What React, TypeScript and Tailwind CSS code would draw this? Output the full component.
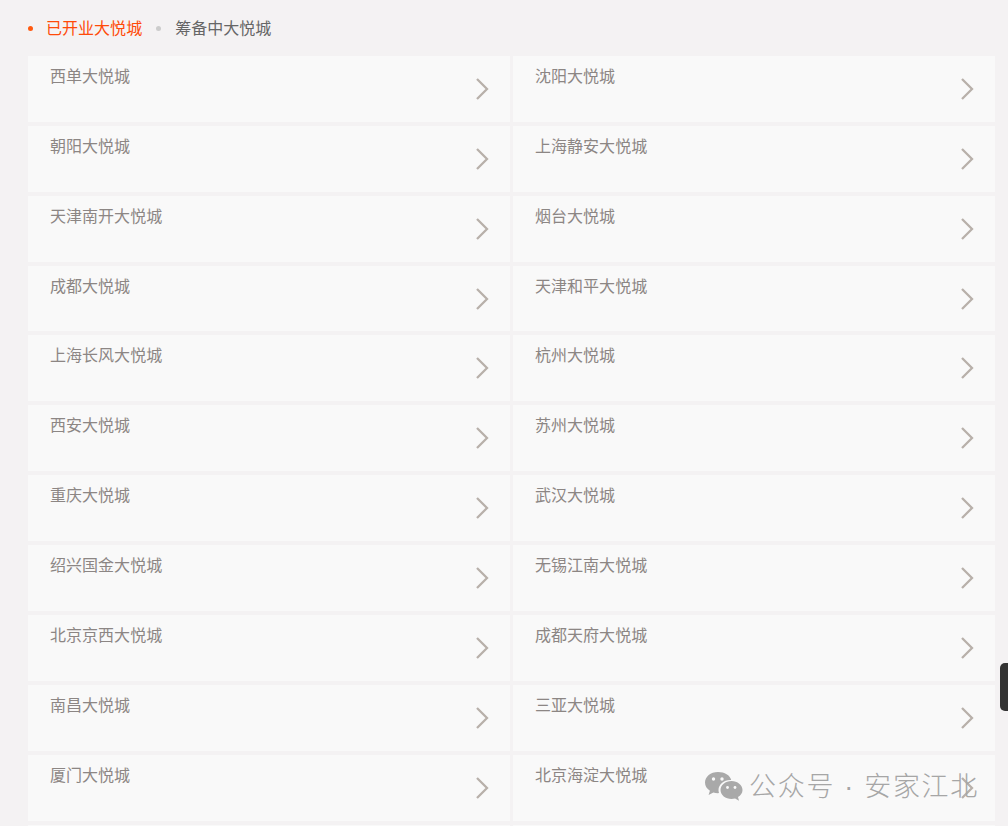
const malls = [
  "西单大悦城", "沈阳大悦城",
  "朝阳大悦城", "上海静安大悦城",
  "天津南开大悦城", "烟台大悦城",
  "成都大悦城", "天津和平大悦城",
  "上海长风大悦城", "杭州大悦城",
  "西安大悦城", "苏州大悦城",
  "重庆大悦城", "武汉大悦城",
  "绍兴国金大悦城", "无锡江南大悦城",
  "北京京西大悦城", "成都天府大悦城",
  "南昌大悦城", "三亚大悦城",
  "厦门大悦城", "北京海淀大悦城",
  "", "",
];

const Chevron = () => (
  <svg className="absolute left-[447px] top-[21px]" width="14" height="24" viewBox="0 0 14 24" fill="none" stroke="#b8b0aa" strokeWidth="2.3">
    <polyline points="2,2 12,12 2,22" />
  </svg>
);

const App = () => {
  return (
    <div className="relative h-[826px] w-[1008px] overflow-hidden bg-[#f4f2f3] font-['Liberation_Sans','Noto_Sans_CJK_SC',sans-serif] text-[16px]">
      <div className="flex h-[55.85px] items-start pl-[28px] pt-[18px] leading-[21px]">
        <span className="mt-[8px] h-[5px] w-[5px] rounded-full bg-[#ff5a10]" />
        <span className="ml-[13px] tracking-[0.03px] text-[#ff4a08]">已开业大悦城</span>
        <span className="ml-[14px] mt-[8px] h-[5px] w-[5px] rounded-full bg-[#cccccc]" />
        <span className="ml-[14px] tracking-[0.03px] text-[#666666]">筹备中大悦城</span>
      </div>
      <div className="ml-[28px] grid w-[967px] grid-cols-[482px_482px] gap-x-[3px] gap-y-[4px]">
        {malls.map((name, index) => (
          <div key={index} className="relative h-[65.9px] bg-[#f9f9f9] pl-[22px] pt-[10px] leading-[21px] tracking-[0.03px] text-[#8c8684]">
            {name}
            <Chevron />
          </div>
        ))}
      </div>
      <div className="absolute left-[1000px] top-[663px] h-[48px] w-[8px] rounded-l-[5px] bg-[#333333]" />
      <div className="absolute left-[704px] top-[769px] flex items-center text-[#a6a6a6]">
        <svg width="39" height="32" viewBox="0 0 39 32" fill="#a9a9a9">
          <path d="M14 1C6.5 1 1 5.8 1 11.6c0 3.4 1.900 6.200 4.900 8.200L4.600 24l4.800-2.500c1.300.4 2.900.7 4.400.7l1.200-.1c-.3-1-.5-2-.5-3 0-5.600 5.200-10.100 11.700-10.100h1C26 4 20.600 1 14 1z" />
          <path d="M38.500 18.900c0-5-5-9-11-9s-11 4-11 9 5 9 11 9c1.300 0 2.500-.2 3.600-.5l3.900 2.300-1-3.600c2.700-1.700 4.500-4.200 4.500-7.200z" />
          <circle cx="9.500" cy="8" r="1.700" fill="#f9f9f9" />
          <circle cx="18" cy="8" r="1.700" fill="#f9f9f9" />
          <circle cx="23.500" cy="16.500" r="1.400" fill="#f9f9f9" />
          <circle cx="31" cy="16.500" r="1.400" fill="#f9f9f9" />
        </svg>
        <span className="ml-[6px] whitespace-nowrap text-[27px] font-light leading-[36px] tracking-[1.7px]">公众号 · 安家江北</span>
      </div>
    </div>
  );
};

export default App;
